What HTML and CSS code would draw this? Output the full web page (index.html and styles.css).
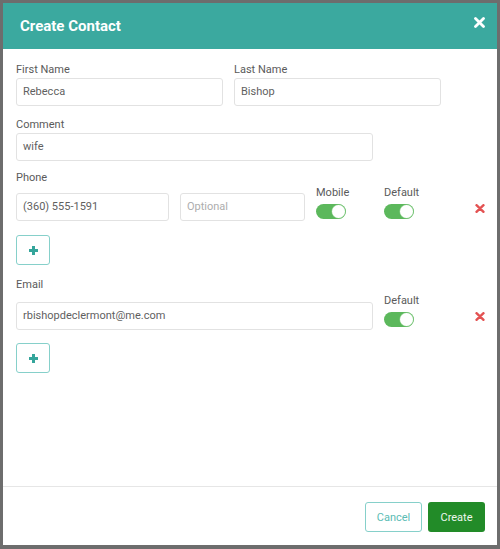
FILE: index.html
```html
<!DOCTYPE html>
<html>
<head>
<meta charset="utf-8">
<link rel="stylesheet" href="styles.css">
</head>
<body>
<div class="modal">
  <div class="modal-header">
    <div class="title">Create Contact</div>
    <svg class="close" width="11" height="11" viewBox="0 0 11 11"><path d="M1.5 1.5 L9.5 9.5 M9.5 1.5 L1.5 9.5" stroke="#fff" stroke-width="2.8" stroke-linecap="round"/></svg>
  </div>
  <div class="modal-body">
    <div class="row names">
      <div class="field">
        <div class="label">First Name</div>
        <div class="input w207">Rebecca</div>
      </div>
      <div class="field">
        <div class="label">Last Name</div>
        <div class="input w207">Bishop</div>
      </div>
    </div>
    <div class="field comment">
      <div class="label">Comment</div>
      <div class="input w357">wife</div>
    </div>
    <div class="label phone-label">Phone</div>
    <div class="row entry phone-row">
      <div class="input w153 in-row">(360) 555-1591</div>
      <div class="input w125 in-row placeholder">Optional</div>
      <div class="toggle-col mobile-col">
        <div class="label">Mobile</div>
        <div class="toggle"><span class="knob"></span></div>
      </div>
      <div class="toggle-col">
        <div class="label">Default</div>
        <div class="toggle"><span class="knob"></span></div>
      </div>
      <svg class="remove" width="10" height="9" viewBox="0 0 10 9"><path d="M1.5 1.2 L8.5 7.8 M8.5 1.2 L1.5 7.8" stroke="#e35252" stroke-width="2.4" stroke-linecap="round"/></svg>
    </div>
    <div class="add-btn add-phone">
      <svg width="11" height="11" viewBox="0 0 11 11"><path d="M5.5 1 V10 M1 5.5 H10" stroke="#35a59b" stroke-width="3"/></svg>
    </div>
    <div class="label email-label">Email</div>
    <div class="row entry email-row">
      <div class="input w357 in-row-email">rbishopdeclermont@me.com</div>
      <div class="toggle-col email-toggle">
        <div class="label">Default</div>
        <div class="toggle"><span class="knob"></span></div>
      </div>
      <svg class="remove" width="10" height="9" viewBox="0 0 10 9"><path d="M1.5 1.2 L8.5 7.8 M8.5 1.2 L1.5 7.8" stroke="#e35252" stroke-width="2.4" stroke-linecap="round"/></svg>
    </div>
    <div class="add-btn add-email">
      <svg width="11" height="11" viewBox="0 0 11 11"><path d="M5.5 1 V10 M1 5.5 H10" stroke="#35a59b" stroke-width="3"/></svg>
    </div>
  </div>
  <div class="modal-footer">
    <div class="btn btn-cancel">Cancel</div>
    <div class="btn btn-create">Create</div>
  </div>
</div>
</body>
</html>
```
FILE: styles.css
```css
html, body {
  margin: 0;
  padding: 0;
}
body {
  background: #6d6d6d;
  width: 500px;
  height: 549px;
  padding: 3px 3px 4px 3px;
  box-sizing: border-box;
  font-family: Roboto, "Liberation Sans", sans-serif;
  font-size: 11px;
  color: #5a5a5a;
}
.modal {
  background: #fff;
  width: 494px;
  height: 542px;
  display: flex;
  flex-direction: column;
}
.modal-header {
  background: #3ba99f;
  height: 46px;
  box-sizing: border-box;
  padding: 14px 12px 0 17px;
  display: flex;
  justify-content: space-between;
  align-items: flex-start;
}
.title {
  color: #fff;
  font-weight: bold;
  font-size: 15px;
  line-height: 18px;
}
.modal-body {
  flex: 1;
  padding: 14px 12px 0 13px;
}
.row {
  display: flex;
  align-items: flex-start;
}
.names {
  gap: 11px;
}
.label {
  line-height: 14px;
  height: 14px;
  color: #5a5a5a;
}
.field .label {
  margin-bottom: 1px;
}
.input {
  height: 28px;
  box-sizing: border-box;
  border: 1px solid #e2e2e2;
  border-radius: 3px;
  padding: 0 6px;
  line-height: 26px;
  color: #5f5f5f;
  white-space: nowrap;
}
.placeholder {
  color: #adadad;
}
.w207 { width: 207px; }
.w357 { width: 357px; }
.w153 { width: 153px; }
.w125 { width: 125px; }
.comment {
  margin-top: 12px;
}
.phone-label {
  margin-top: 10px;
}
.entry {
  gap: 11px;
}
.in-row {
  margin-top: 8px;
}
.toggle-col {
  display: flex;
  flex-direction: column;
  padding-top: 1px;
}
.mobile-col {
  width: 57px;
}
.toggle {
  margin-top: 4px;
  width: 30px;
  height: 15px;
  border-radius: 8px;
  background: #5cb85c;
  position: relative;
}
.knob {
  position: absolute;
  right: 1px;
  top: 1px;
  width: 13px;
  height: 13px;
  border-radius: 50%;
  background: #fff;
  box-shadow: 0 0 0 0.5px #8fd08f;
}
.remove {
  margin-left: auto;
  margin-top: 19px;
}
.add-btn {
  width: 34px;
  height: 30px;
  box-sizing: border-box;
  border: 1px solid #86d0ca;
  border-radius: 3px;
  display: flex;
  align-items: center;
  justify-content: center;
}
.add-phone {
  margin-top: 14px;
}
.email-label {
  margin-top: 13px;
}
.in-row-email {
  margin-top: 10px;
}
.email-toggle {
  padding-top: 2px;
}
.email-toggle .toggle {
  margin-top: 4px;
}
.email-row .remove {
  margin-top: 20px;
}
.add-email {
  margin-top: 13px;
}
.modal-footer {
  border-top: 1px solid #e6e6e6;
  padding: 15px 12px 13px 0;
  display: flex;
  justify-content: flex-end;
  gap: 6px;
}
.btn {
  width: 57px;
  height: 30px;
  box-sizing: border-box;
  border-radius: 3px;
  display: flex;
  align-items: center;
  justify-content: center;
  font-size: 11px;
}
.btn-cancel {
  border: 1px solid #86d0ca;
  color: #5bbcb4;
}
.btn-create {
  background: #228b28;
  color: #eef7ee;
}
```
